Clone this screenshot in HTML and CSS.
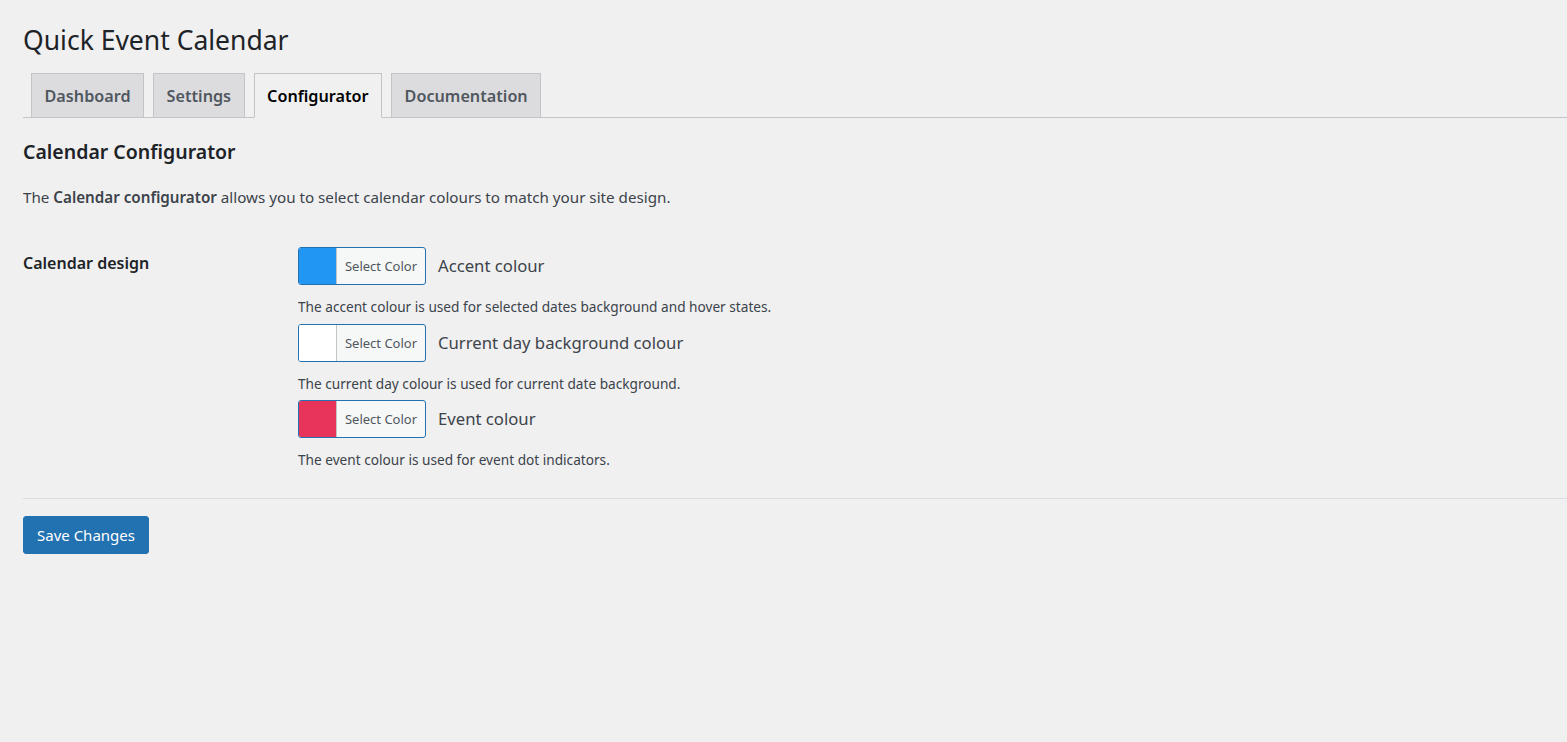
FILE: index.html
```html
<!DOCTYPE html>
<html lang="en">
<head>
<meta charset="utf-8">
<title>Quick Event Calendar</title>
<link rel="stylesheet" href="styles.css">
</head>
<body>
<div class="wrap">
  <h1 class="page-title">Quick Event Calendar</h1>
  <nav class="nav-tabs">
    <a class="nav-tab" href="#">Dashboard</a>
    <a class="nav-tab" href="#">Settings</a>
    <a class="nav-tab nav-tab-active" href="#">Configurator</a>
    <a class="nav-tab" href="#">Documentation</a>
  </nav>
  <h2 class="section-title">Calendar Configurator</h2>
  <p class="intro">The <strong>Calendar configurator</strong> allows you to select calendar colours to match your site design.</p>
  <div class="form-row">
    <div class="form-label">Calendar design</div>
    <div class="form-field">
      <div class="picker-row">
        <button class="color-result" type="button"><span class="swatch swatch-accent"></span><span class="color-text">Select Color</span></button>
        <span class="picker-label">Accent colour</span>
      </div>
      <p class="description">The accent colour is used for selected dates background and hover states.</p>
      <div class="picker-row">
        <button class="color-result" type="button"><span class="swatch swatch-today"></span><span class="color-text">Select Color</span></button>
        <span class="picker-label">Current day background colour</span>
      </div>
      <p class="description">The current day colour is used for current date background.</p>
      <div class="picker-row">
        <button class="color-result" type="button"><span class="swatch swatch-event"></span><span class="color-text">Select Color</span></button>
        <span class="picker-label">Event colour</span>
      </div>
      <p class="description">The event colour is used for event dot indicators.</p>
    </div>
  </div>
  <hr class="divider">
  <button class="button-primary" type="button">Save Changes</button>
</div>
</body>
</html>
```
FILE: styles.css
```css
* { box-sizing: border-box; }
html, body { margin: 0; padding: 0; }
body {
  background: #f0f0f1;
  color: #3c434a;
  font-family: "Noto Sans", "Open Sans", sans-serif;
  font-size: 14px;
}
.wrap { padding: 23px 0 0 23px; }
.page-title {
  margin: 0 0 16px;
  font-size: 26.5px;
  font-weight: 400;
  line-height: 34px;
  color: #1d2327;
}
.nav-tabs {
  display: flex;
  gap: 9px;
  padding-left: 8px;
  border-bottom: 1px solid #c3c4c7;
  height: 45px;
}
.nav-tab {
  display: block;
  height: 45px;
  padding: 0 12.5px;
  border: 1px solid #c3c4c7;
  background: #dcdcde;
  color: #50575e;
  font-size: 16.2px;
  font-weight: 600;
  line-height: 44px;
  text-decoration: none;
  white-space: nowrap;
}
.nav-tab-active {
  background: #f0f0f1;
  border-bottom-color: #f0f0f1;
  color: #000;
}
.section-title {
  margin: 21px 0 0;
  font-size: 19.5px;
  font-weight: 600;
  line-height: 26px;
  color: #1d2327;
}
.intro {
  margin: 21px 0 0;
  font-size: 15.2px;
  line-height: 22px;
}
.intro strong { font-weight: 600; }
.form-row {
  display: grid;
  grid-template-columns: 275px 1fr;
  padding-top: 39px;
  padding-bottom: 28px;
}
.form-label {
  padding-top: 5px;
  font-size: 16px;
  font-weight: 600;
  line-height: 22px;
  color: #1d2327;
}
.picker-row {
  display: flex;
  align-items: center;
  gap: 12px;
}
.color-result {
  display: flex;
  width: 128px;
  height: 38px;
  padding: 0;
  border: 1px solid #2271b1;
  border-radius: 3px;
  background: #f6f7f7;
  overflow: hidden;
  font-family: inherit;
  cursor: pointer;
}
.swatch { width: 37px; flex: none; }
.swatch-accent { background: #2196f3; }
.swatch-today { background: #ffffff; }
.swatch-event { background: #e8345a; }
.color-text {
  flex: 1;
  border-left: 1px solid #c3c4c7;
  font-size: 13px;
  line-height: 36px;
  color: #50575e;
  text-align: center;
}
.picker-label {
  font-size: 16.7px;
  line-height: 24px;
  color: #3c434a;
}
.description {
  margin: 12px 0 6.5px;
  font-size: 13.65px;
  line-height: 20px;
  color: #3c434a;
}
.description:last-child { margin-bottom: 0; }
.divider {
  margin: 0;
  height: 0;
  border: 0;
  border-top: 1px solid #dcdcde;
}
.button-primary {
  margin-top: 17px;
  height: 38px;
  padding: 0 13px;
  border: 1px solid #2271b1;
  border-radius: 3px;
  background: #2271b1;
  color: #fff;
  font-family: inherit;
  font-size: 15px;
  cursor: pointer;
}
```
